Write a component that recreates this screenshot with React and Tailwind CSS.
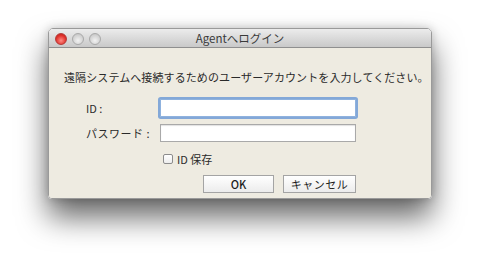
export default function App() {
  const font = { fontFamily: '"Noto Sans CJK JP", "Noto Sans", sans-serif' };
  return (
    <div className="w-[480px] h-[267px] bg-white pt-[28px] pl-[48px] overflow-hidden" style={font}>
      <div className="w-[384px] h-[171px] flex flex-col rounded-t-[5px] rounded-b-[4px] overflow-hidden shadow-[0_18px_30px_rgba(0,0,0,0.6),0_0_10px_rgba(0,0,0,0.2)] border border-[#9a9a9a]">
        <div className="h-[19px] shrink-0 grid grid-cols-[1fr_auto_1fr] items-center bg-gradient-to-b from-[#ececec] to-[#c9c9c9] border-b border-[#8f8f8f]">
          <div className="flex items-center gap-[5px] pl-[6px]">
            <span className="w-[12px] h-[12px] rounded-full border border-[#b43a38] bg-[radial-gradient(circle_at_50%_65%,#ff8b84,#e0312b_60%,#b31d18)]" />
            <span className="w-[12px] h-[12px] rounded-full border border-[#a9a9a9] bg-[radial-gradient(circle_at_50%_65%,#f2f2f2,#d3d3d3_60%,#bdbdbd)]" />
            <span className="w-[12px] h-[12px] rounded-full border border-[#a9a9a9] bg-[radial-gradient(circle_at_50%_65%,#f2f2f2,#d3d3d3_60%,#bdbdbd)]" />
          </div>
          <div className="text-[11.5px] leading-[19px] text-[#3a3a3a]">Agentへログイン</div>
          <div />
        </div>
        <div className="flex-1 bg-[#eeebe1] pt-[21px] pl-[15px] text-[#2a2a2a]">
          <p className="text-[11px] leading-[16px] tracking-[0.1px] whitespace-nowrap">
            遠隔システムへ接続するためのユーザーアカウントを入力してください。
          </p>
          <div className="mt-[14px] grid grid-cols-[96px_196px] items-center gap-y-[7px]">
            <label className="pl-[22px] text-[11px] leading-[18px]">ID :</label>
            <div className="h-[18px] bg-white border border-[#8fb2de] shadow-[0_0_0_2px_rgba(112,156,214,0.85)] rounded-[1px]" />
            <label className="pl-[22px] text-[11px] leading-[18px] tracking-[0.5px]">パスワード :</label>
            <div className="h-[18px] bg-white border border-[#a9a9a9] shadow-[inset_0_1px_1px_rgba(0,0,0,0.12)]" />
          </div>
          <div className="mt-[9px] ml-[99px] h-[16px] flex items-center gap-[4px] text-[11px]">
            <span className="w-[10px] h-[10px] bg-gradient-to-b from-white to-[#ededed] border border-[#8c8c8c] rounded-[2px]" />
            <span className="leading-[16px]">ID 保存</span>
          </div>
          <div className="mt-[8px] ml-[139px] flex gap-[9px] text-[11px]">
            <button className="w-[71px] h-[18px] leading-[16px] bg-gradient-to-b from-white to-[#ececec] border border-[#a4a4a4] text-[#1e1e1e] font-medium">OK</button>
            <button className="w-[73px] h-[18px] leading-[16px] bg-gradient-to-b from-white to-[#ececec] border border-[#a4a4a4] text-[#1e1e1e] tracking-[0.5px]">キャンセル</button>
          </div>
        </div>
      </div>
    </div>
  );
}
